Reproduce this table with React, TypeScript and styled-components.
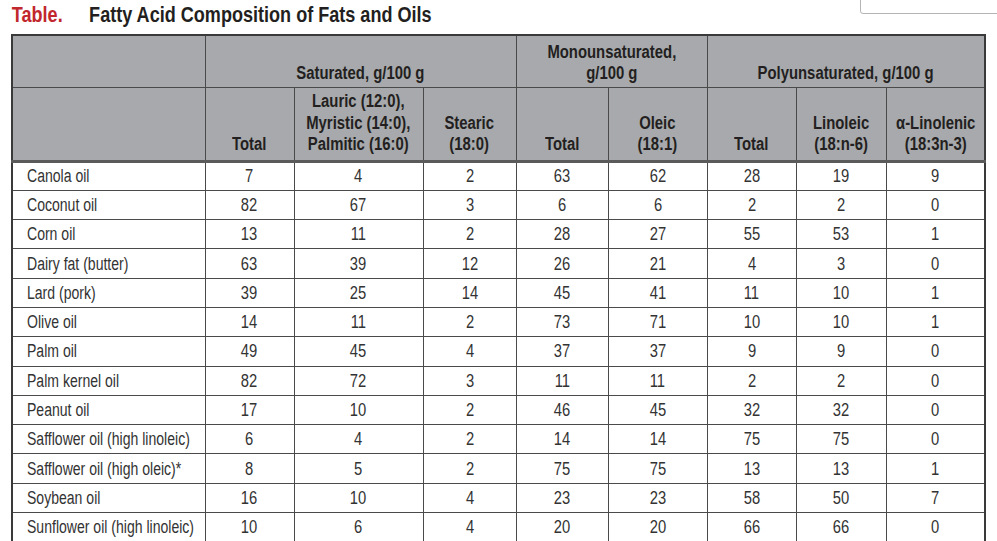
import styled, { createGlobalStyle } from 'styled-components';

const GlobalStyle = createGlobalStyle`
  html, body {
    margin: 0;
    padding: 0;
    background: #ffffff;
  }
  body {
    font-family: 'Liberation Sans', Arial, sans-serif;
    color: #333333;
  }
`;

const rows: [string, ...number[]][] = [
  ['Canola oil', 7, 4, 2, 63, 62, 28, 19, 9],
  ['Coconut oil', 82, 67, 3, 6, 6, 2, 2, 0],
  ['Corn oil', 13, 11, 2, 28, 27, 55, 53, 1],
  ['Dairy fat (butter)', 63, 39, 12, 26, 21, 4, 3, 0],
  ['Lard (pork)', 39, 25, 14, 45, 41, 11, 10, 1],
  ['Olive oil', 14, 11, 2, 73, 71, 10, 10, 1],
  ['Palm oil', 49, 45, 4, 37, 37, 9, 9, 0],
  ['Palm kernel oil', 82, 72, 3, 11, 11, 2, 2, 0],
  ['Peanut oil', 17, 10, 2, 46, 45, 32, 32, 0],
  ['Safflower oil (high linoleic)', 6, 4, 2, 14, 14, 75, 75, 0],
  ['Safflower oil (high oleic)*', 8, 5, 2, 75, 75, 13, 13, 1],
  ['Soybean oil', 16, 10, 4, 23, 23, 58, 50, 7],
  ['Sunflower oil (high linoleic)', 10, 6, 4, 20, 20, 66, 66, 0],
];

const colWidths = [193, 89, 129, 93, 92, 99, 89, 90, 99];

const App = () => {
  return (
    <>
      <GlobalStyle />
      <Page>
        <CornerBox />
        <Title>
          <Label>Table.</Label>
          <Caption>Fatty Acid Composition of Fats and Oils</Caption>
        </Title>
        <DataTable>
          <colgroup>
            {colWidths.map((w, i) => (
              <col key={i} style={{ width: w }} />
            ))}
          </colgroup>
          <thead>
            <GroupRow>
              <HeadCell />
              <HeadCell colSpan={3}>
                <Narrow>Saturated, g/100 g</Narrow>
              </HeadCell>
              <HeadCell colSpan={2}>
                <Narrow>
                  Monounsaturated,
                  <br />
                  g/100 g
                </Narrow>
              </HeadCell>
              <HeadCell colSpan={3}>
                <Narrow>Polyunsaturated, g/100 g</Narrow>
              </HeadCell>
            </GroupRow>
            <SubRow>
              <HeadCell />
              <HeadCell>
                <Narrow>Total</Narrow>
              </HeadCell>
              <HeadCell>
                <Narrow>
                  Lauric (12:0),
                  <br />
                  Myristic (14:0),
                  <br />
                  Palmitic (16:0)
                </Narrow>
              </HeadCell>
              <HeadCell>
                <Narrow>
                  Stearic
                  <br />
                  (18:0)
                </Narrow>
              </HeadCell>
              <HeadCell>
                <Narrow>Total</Narrow>
              </HeadCell>
              <HeadCell>
                <Narrow>
                  Oleic
                  <br />
                  (18:1)
                </Narrow>
              </HeadCell>
              <HeadCell>
                <Narrow>Total</Narrow>
              </HeadCell>
              <HeadCell>
                <Narrow>
                  Linoleic
                  <br />
                  (18:n-6)
                </Narrow>
              </HeadCell>
              <HeadCell>
                <Narrow>
                  α-Linolenic
                  <br />
                  (18:3n-3)
                </Narrow>
              </HeadCell>
            </SubRow>
          </thead>
          <tbody>
            {rows.map(([name, ...vals]) => (
              <BodyRow key={name}>
                <NameCell>
                  <Narrow $origin="left" $scale={0.78}>
                    {name}
                  </Narrow>
                </NameCell>
                {vals.map((v, i) => (
                  <NumCell key={i}>
                    <Narrow $scale={0.82}>{v}</Narrow>
                  </NumCell>
                ))}
              </BodyRow>
            ))}
          </tbody>
        </DataTable>
      </Page>
    </>
  );
};

export default App;

const Page = styled.div`
  position: relative;
  width: 997px;
  height: 541px;
  overflow: hidden;
  padding: 3px 0 0 11px;
  box-sizing: border-box;
`;

const CornerBox = styled.div`
  position: absolute;
  top: -2px;
  left: 860px;
  width: 150px;
  height: 14px;
  border: 1px solid #b5b5b5;
  border-bottom-left-radius: 3px;
  background: #ffffff;
`;

// condensed look: the page font has no narrow cut, so squeeze horizontally
const Narrow = styled.span<{ $scale?: number; $origin?: string }>`
  display: inline-block;
  transform: scaleX(${(p) => p.$scale ?? 0.85});
  transform-origin: ${(p) => p.$origin ?? 'center'} bottom;
  white-space: nowrap;
`;

const Title = styled.div`
  display: flex;
  align-items: baseline;
  height: 31px;
  font-weight: bold;
  font-size: 21.5px;
  line-height: 24px;
  transform: scaleX(0.84);
  transform-origin: left top;
`;

const Label = styled.span`
  color: #c1272d;
  width: 92px;
  padding-left: 1px;
`;

const Caption = styled.span`
  color: #231f20;
`;

const DataTable = styled.table`
  border-collapse: collapse;
  table-layout: fixed;
  width: 973px;
  border: 2px solid #3a3a3a;
  font-size: 18px;
`;

const HeadCell = styled.th`
  background: #a7a9ac;
  color: #231f20;
  font-weight: bold;
  font-size: 17.5px;
  text-align: center;
  vertical-align: bottom;
  line-height: 21.5px;
  padding: 0 2px 4px;
  border: 1px solid #4a4a4a;
`;

const GroupRow = styled.tr`
  height: 52px;
  th {
    padding-bottom: 2px;
  }
`;

const SubRow = styled.tr`
  height: 74px;
  th {
    border-bottom: 3px solid #5a5a5a;
  }
`;

const BodyRow = styled.tr`
  height: 29.3px;
`;

const NameCell = styled.td`
  padding: 0 0 0 14px;
  border: 1px solid #4a4a4a;
  white-space: nowrap;
  color: #333333;
  line-height: 20px;
`;

const NumCell = styled.td`
  text-align: center;
  padding: 0;
  border: 1px solid #4a4a4a;
  color: #333333;
  line-height: 20px;
`;
